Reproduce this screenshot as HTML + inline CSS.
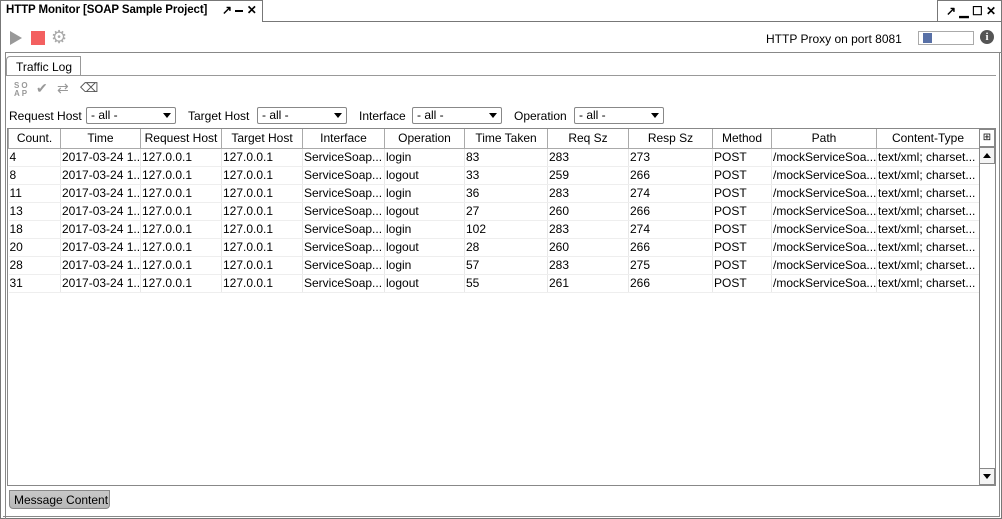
<!DOCTYPE html>
<html><head><style>
*{box-sizing:border-box;margin:0;padding:0}
body{width:1002px;height:519px;background:#fff;font-family:"Liberation Sans",sans-serif;font-size:12px;color:#000;position:relative;overflow:hidden}
.a{position:absolute}
.sel{position:absolute;height:17px;border:1px solid #888;background:#fff;font-size:12px;padding-left:4px;line-height:15px;border-radius:2px}
.sel:after{content:"";position:absolute;right:4px;top:5px;border-left:4px solid transparent;border-right:4px solid transparent;border-top:5px solid #000}
table{border-collapse:collapse;table-layout:fixed;position:absolute;left:8px;top:129px;width:971px}
td,th{height:18px;font-weight:normal;white-space:nowrap;overflow:hidden;padding:0 1px;font-size:12px}
th{border:1px solid #aaa;border-top:none;text-align:center;height:19px;background:#fff}
td{border-right:1px solid #e8e8e8;border-bottom:1px solid #eee}
</style></head><body>
<div class="a" style="left:0;top:21px;width:1002px;height:498px;border:1px solid #777"></div>
<div class="a" style="left:0;top:0;width:263px;height:22px;border:1px solid #777;border-bottom:none;background:#fff"></div>
<div class="a" style="left:6px;top:4px;font-weight:bold;font-size:11.5px;letter-spacing:-0.1px">HTTP Monitor [SOAP Sample Project]</div>
<div class="a" style="left:222px;top:3px;font-size:12px;font-weight:bold">↗ <span style="display:inline-block;width:8px;height:2px;background:#000;vertical-align:middle"></span> ✕</div>
<div class="a" style="left:937px;top:0;width:65px;height:22px;border:1px solid #777;background:#fff;font-weight:bold;font-size:12px;padding:3px 0 0 8px">↗ ▁ ☐ ✕</div>
<div class="a" style="left:10px;top:31px;border-left:12px solid #999;border-top:7px solid transparent;border-bottom:7px solid transparent"></div>
<div class="a" style="left:31px;top:31px;width:14px;height:14px;background:#f36060"></div>
<div class="a" style="left:51px;top:27px;font-size:18px;color:#aaa">⚙</div>
<div class="a" style="left:766px;top:32px">HTTP Proxy on port 8081</div>
<div class="a" style="left:918px;top:31px;width:56px;height:14px;border:1px solid #aaa"><div style="margin:1px 0 0 4px;width:9px;height:10px;background:#5870a6"></div></div>
<div class="a" style="left:980px;top:30px;width:14px;height:14px;border-radius:50%;background:#555;color:#fff;font-weight:bold;font-size:11px;text-align:center;line-height:14px;font-family:'Liberation Serif',serif">i</div>
<div class="a" style="left:5px;top:52px;width:997px;height:467px;border-top:1px solid #888;border-left:1px solid #888"></div>
<div class="a" style="left:3px;top:516px;width:996px;height:1px;background:#888"></div>
<div class="a" style="left:999px;top:52px;width:1px;height:465px;background:#888"></div>
<div class="a" style="left:6px;top:56px;width:75px;height:20px;border:1px solid #999;border-bottom:none;border-radius:4px 0 0 0;background:#fff;padding:3px 0 0 9px">Traffic Log</div>
<div class="a" style="left:6px;top:75px;width:990px;height:1px;background:#999"></div>
<div class="a" style="left:14px;top:82px;font-size:8px;color:#999;line-height:8px;letter-spacing:2px;font-weight:bold">SO<br>AP</div>
<div class="a" style="left:36px;top:80px;color:#999;font-size:14px">✔</div>
<div class="a" style="left:57px;top:80px;color:#999;font-size:14px">⇄</div>
<div class="a" style="left:80px;top:80px;color:#555;font-size:13px">⌫</div>
<div class="a" style="left:9px;top:109px">Request Host</div>
<div class="sel" style="left:86px;top:107px;width:90px">- all -</div>
<div class="a" style="left:188px;top:109px">Target Host</div>
<div class="sel" style="left:257px;top:107px;width:90px">- all -</div>
<div class="a" style="left:359px;top:109px">Interface</div>
<div class="sel" style="left:412px;top:107px;width:90px">- all -</div>
<div class="a" style="left:514px;top:109px">Operation</div>
<div class="sel" style="left:574px;top:107px;width:90px">- all -</div>
<div class="a" style="left:7px;top:128px;width:989px;height:358px;border:1px solid #888"></div>
<table>
<colgroup><col style="width:52px"><col style="width:80px"><col style="width:81px"><col style="width:81px"><col style="width:82px"><col style="width:80px"><col style="width:83px"><col style="width:81px"><col style="width:84px"><col style="width:59px"><col style="width:105px"><col style="width:103px"></colgroup>
<tr><th>Count.</th><th>Time</th><th>Request Host</th><th>Target Host</th><th>Interface</th><th>Operation</th><th>Time Taken</th><th>Req Sz</th><th>Resp Sz</th><th>Method</th><th>Path</th><th>Content-Type</th></tr>
<tr><td>4</td><td>2017-03-24 1...</td><td>127.0.0.1</td><td>127.0.0.1</td><td>ServiceSoap...</td><td>login</td><td>83</td><td>283</td><td>273</td><td>POST</td><td>/mockServiceSoa...</td><td>text/xml; charset...</td></tr>
<tr><td>8</td><td>2017-03-24 1...</td><td>127.0.0.1</td><td>127.0.0.1</td><td>ServiceSoap...</td><td>logout</td><td>33</td><td>259</td><td>266</td><td>POST</td><td>/mockServiceSoa...</td><td>text/xml; charset...</td></tr>
<tr><td>11</td><td>2017-03-24 1...</td><td>127.0.0.1</td><td>127.0.0.1</td><td>ServiceSoap...</td><td>login</td><td>36</td><td>283</td><td>274</td><td>POST</td><td>/mockServiceSoa...</td><td>text/xml; charset...</td></tr>
<tr><td>13</td><td>2017-03-24 1...</td><td>127.0.0.1</td><td>127.0.0.1</td><td>ServiceSoap...</td><td>logout</td><td>27</td><td>260</td><td>266</td><td>POST</td><td>/mockServiceSoa...</td><td>text/xml; charset...</td></tr>
<tr><td>18</td><td>2017-03-24 1...</td><td>127.0.0.1</td><td>127.0.0.1</td><td>ServiceSoap...</td><td>login</td><td>102</td><td>283</td><td>274</td><td>POST</td><td>/mockServiceSoa...</td><td>text/xml; charset...</td></tr>
<tr><td>20</td><td>2017-03-24 1...</td><td>127.0.0.1</td><td>127.0.0.1</td><td>ServiceSoap...</td><td>logout</td><td>28</td><td>260</td><td>266</td><td>POST</td><td>/mockServiceSoa...</td><td>text/xml; charset...</td></tr>
<tr><td>28</td><td>2017-03-24 1...</td><td>127.0.0.1</td><td>127.0.0.1</td><td>ServiceSoap...</td><td>login</td><td>57</td><td>283</td><td>275</td><td>POST</td><td>/mockServiceSoa...</td><td>text/xml; charset...</td></tr>
<tr><td>31</td><td>2017-03-24 1...</td><td>127.0.0.1</td><td>127.0.0.1</td><td>ServiceSoap...</td><td>logout</td><td>55</td><td>261</td><td>266</td><td>POST</td><td>/mockServiceSoa...</td><td>text/xml; charset...</td></tr>
</table>
<div class="a" style="left:979px;top:129px;width:16px;height:18px;border:1px solid #888;font-size:10px;text-align:center;line-height:15px;background:#fff">⊞</div>
<div class="a" style="left:979px;top:147px;width:16px;height:338px;border-left:1px solid #888;background:#fff"></div>
<div class="a" style="left:979px;top:147px;width:16px;height:17px;border:1px solid #888;background:#f4f4f4"><div style="margin:5px 0 0 3px;border-left:4px solid transparent;border-right:4px solid transparent;border-bottom:5px solid #000;width:0"></div></div>
<div class="a" style="left:979px;top:468px;width:16px;height:17px;border:1px solid #888;background:#f4f4f4"><div style="margin:5px 0 0 3px;border-left:4px solid transparent;border-right:4px solid transparent;border-top:5px solid #000;width:0"></div></div>
<div class="a" style="left:9px;top:490px;width:101px;height:19px;border:1px solid #888;border-radius:0 0 4px 4px;background:linear-gradient(#c8c8c8,#b8b8b8);padding:2px 0 0 4px">Message Content</div>
</body></html>
